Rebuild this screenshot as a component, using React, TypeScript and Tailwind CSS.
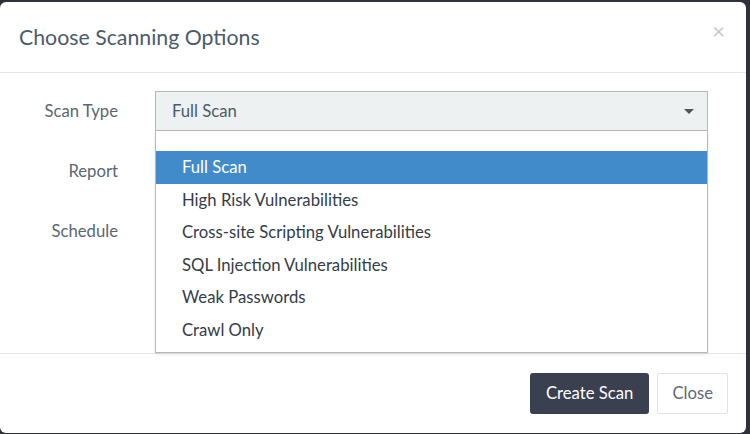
import { useState } from "react";

const options = [
  "Full Scan",
  "High Risk Vulnerabilities",
  "Cross-site Scripting Vulnerabilities",
  "SQL Injection Vulnerabilities",
  "Weak Passwords",
  "Crawl Only",
];

function App() {
  const [selected] = useState(0);

  return (
    <div
      className="w-[750px] h-[434px] overflow-hidden bg-[#2e313c] pt-[2px] pr-[4px]"
      style={{ fontFamily: "Lato, 'Open Sans', sans-serif" }}
    >
      <div className="relative h-[431px] bg-white rounded-[6px] flex flex-col">
        {/* header */}
        <div className="h-[71px] flex items-center justify-between pl-[19px] pr-[21px] border-b border-[#e5e5e5]">
          <h4 className="text-[21.3px] text-[#4b5b6b] mt-[2px]">Choose Scanning Options</h4>
          <span className="text-[22px] leading-none text-[#c8c8c8] -mt-[12px]">×</span>
        </div>

        {/* body */}
        <div className="h-[281px] pt-[18px] flex flex-col gap-[20px] border-b border-[#e5e5e5]">
          {[
            ["Scan Type", true],
            ["Report", false],
            ["Schedule", false],
          ].map(([label, isSelect]) => (
            <div key={label as string} className="flex items-center h-[40px]">
              <label className="w-[118px] text-right text-[16.7px] text-[#5b6672] mt-[2px]">
                {label}
              </label>
              {isSelect && (
                <div className="ml-[37px] w-[553px] h-[40px] bg-[#edf1f2] border border-[#b9b6b6] flex items-center justify-between pl-[16px] pr-[13px]">
                  <span className="text-[16.7px] text-[#4c5a68] mt-[1px]">{options[selected]}</span>
                  <svg width="10" height="5" viewBox="0 0 10 5">
                    <path d="M0 0 L10 0 L5 5 Z" fill="#555" />
                  </svg>
                </div>
              )}
            </div>
          ))}
        </div>

        {/* footer */}
        <div className="flex-1 flex justify-end items-start pt-[19px] pr-[18px] gap-[8px]">
          <button className="h-[41px] px-[16px] rounded-[3px] bg-[#3b4051] text-white text-[16.7px]">
            Create Scan
          </button>
          <button className="h-[41px] px-[14px] rounded-[2px] border border-[#dde3e6] text-[#5b6a79] text-[16.7px]">
            Close
          </button>
        </div>

        {/* open dropdown */}
        <ul className="absolute left-[155px] top-[129px] w-[553px] h-[222px] bg-white border border-[#b9b6b6] border-t-0 pt-[20px] shadow-[0_2px_3px_rgba(0,0,0,0.08)]">
          {options.map((o, i) => (
            <li
              key={o}
              className={
                i === selected
                  ? "h-[33px] flex items-center pl-[26px] bg-[#418bca] text-white text-[16.7px]"
                  : "h-[32.5px] flex items-center pl-[26px] text-[#343d47] text-[16.7px]"
              }
            >
              {o}
            </li>
          ))}
        </ul>
      </div>
    </div>
  );
}

export default App;
